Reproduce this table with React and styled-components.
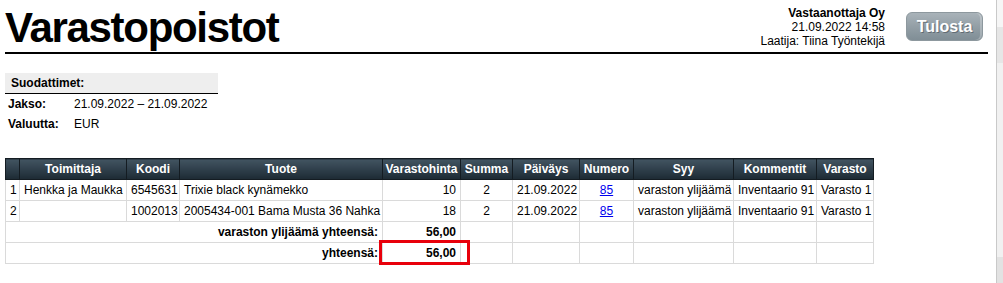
import styled, { createGlobalStyle } from "styled-components";

const GlobalStyle = createGlobalStyle`
  html, body {
    margin: 0;
    padding: 0;
    background: #fff;
  }
  body {
    font-family: "Liberation Sans", Arial, sans-serif;
    font-size: 12px;
    color: #000;
  }
`;

const Page = styled.div`
  display: flex;
  min-height: 283px;
`;

const Main = styled.div`
  flex: 1;
  padding: 0 8px 0 5px;
`;

const ScrollEdge = styled.div`
  width: 6px;
  border-left: 1px solid #c9c9c9;
  background: linear-gradient(
    to bottom,
    #f6f6f6 0,
    #f6f6f6 27px,
    #e6e6e6 27px,
    #e6e6e6 63px,
    #f1f1f1 63px,
    #f1f1f1 257px,
    #e2e2e2 257px
  );
`;

const Header = styled.div`
  display: flex;
  align-items: flex-start;
  padding-top: 4px;
  border-bottom: 2px solid #000;
`;

const Title = styled.h1`
  flex: 1;
  margin: 0;
  font-size: 42px;
  line-height: 48px;
  font-weight: bold;
  letter-spacing: -1.3px;
`;

const Meta = styled.div`
  padding-top: 2px;
  text-align: right;
  line-height: 14px;
`;

const MetaLine = styled.div`
  font-weight: ${(props) => (props.$bold ? "bold" : "normal")};
`;

const PrintButton = styled.button`
  margin: 8px 5px 0 21px;
  width: 77px;
  height: 29px;
  padding: 0;
  border: 1px solid #8d989e;
  border-radius: 6px;
  background: linear-gradient(to bottom, #a9b3b9 0%, #939fa6 50%, #808e96 100%);
  color: #fff;
  font-family: "Liberation Sans", Arial, sans-serif;
  font-size: 16px;
  font-weight: bold;
  text-shadow: 1px 1px 0 rgba(60, 70, 78, 0.55);
  box-shadow: inset -2px 0 0 rgba(255, 255, 255, 0.25);
  cursor: pointer;
`;

const FilterTable = styled.table`
  margin-top: 19px;
  width: 213px;
  border-collapse: collapse;
  line-height: 14px;
`;

const FilterHead = styled.th`
  background: #eee;
  border-bottom: 1px solid #000;
  text-align: left;
  padding: 3px 6px;
  font-weight: bold;
`;

const FilterLabel = styled.td`
  width: 60px;
  padding: 3px 3px;
  font-weight: bold;
`;

const FilterValue = styled.td`
  padding: 3px 3px;
`;

const DataTable = styled.table`
  margin-top: 24px;
  width: 868px;
  table-layout: fixed;
  border-collapse: collapse;
  line-height: 14px;
`;

const HeadCell = styled.th`
  background: linear-gradient(to bottom, #425461 0%, #2f3f4b 50%, #1d2a33 100%);
  color: #fff;
  font-weight: bold;
  text-align: center;
  white-space: nowrap;
  padding: 3px 2px;
  border: 1px solid #141c22;
`;

const Cell = styled.td`
  padding: 3px 4px;
  border: 1px solid #dadada;
  white-space: nowrap;
  overflow: hidden;
  text-align: ${(props) => props.$align || "left"};
  font-weight: ${(props) => (props.$bold ? "bold" : "normal")};
`;

const HighlightCell = styled(Cell)`
  position: relative;
  overflow: visible;

  &::after {
    content: "";
    position: absolute;
    left: -4px;
    right: -10px;
    top: -3px;
    bottom: -2px;
    border: 3px solid #e8000b;
    pointer-events: none;
  }
`;

const NumLink = styled.a`
  color: #0000ee;
  text-decoration: underline;
`;

const widths = [14, 107, 53, 203, 78, 52, 67, 54, 100, 83, 57];
const heads = ["", "Toimittaja", "Koodi", "Tuote", "Varastohinta", "Summa", "Päiväys", "Numero", "Syy", "Kommentit", "Varasto"];

const rows = [
  { n: 1, supplier: "Henkka ja Maukka", code: "6545631", product: "Trixie black kynämekko", price: "10" },
  { n: 2, supplier: "", code: "1002013", product: "2005434-001 Bama Musta 36 Nahka", price: "18" },
];

function EmptyTail() {
  return (
    <>
      <Cell />
      <Cell />
      <Cell />
      <Cell />
      <Cell />
      <Cell />
    </>
  );
}

export default function App() {
  return (
    <Page>
      <GlobalStyle />
      <Main>
        <Header>
          <Title>Varastopoistot</Title>
          <Meta>
            <MetaLine $bold>Vastaanottaja Oy</MetaLine>
            <MetaLine>21.09.2022 14:58</MetaLine>
            <MetaLine>Laatija: Tiina Työntekijä</MetaLine>
          </Meta>
          <PrintButton>Tulosta</PrintButton>
        </Header>

        <FilterTable>
          <thead>
            <tr>
              <FilterHead colSpan={2}>Suodattimet:</FilterHead>
            </tr>
          </thead>
          <tbody>
            <tr>
              <FilterLabel>Jakso:</FilterLabel>
              <FilterValue>21.09.2022 – 21.09.2022</FilterValue>
            </tr>
            <tr>
              <FilterLabel>Valuutta:</FilterLabel>
              <FilterValue>EUR</FilterValue>
            </tr>
          </tbody>
        </FilterTable>

        <DataTable>
          <colgroup>
            {widths.map((w, i) => (
              <col key={i} style={{ width: w }} />
            ))}
          </colgroup>
          <thead>
            <tr>
              {heads.map((h, i) => (
                <HeadCell key={i}>{h}</HeadCell>
              ))}
            </tr>
          </thead>
          <tbody>
            {rows.map((r) => (
              <tr key={r.n}>
                <Cell $align="center">{r.n}</Cell>
                <Cell>{r.supplier}</Cell>
                <Cell>{r.code}</Cell>
                <Cell>{r.product}</Cell>
                <Cell $align="right">{r.price}</Cell>
                <Cell $align="center">2</Cell>
                <Cell $align="center">21.09.2022</Cell>
                <Cell $align="center">
                  <NumLink href="#">85</NumLink>
                </Cell>
                <Cell>varaston ylijäämä</Cell>
                <Cell>Inventaario 91</Cell>
                <Cell>Varasto 1</Cell>
              </tr>
            ))}
            <tr>
              <Cell colSpan={4} $align="right" $bold>
                varaston ylijäämä yhteensä:
              </Cell>
              <Cell $align="right" $bold>56,00</Cell>
              <EmptyTail />
            </tr>
            <tr>
              <Cell colSpan={4} $align="right" $bold>
                yhteensä:
              </Cell>
              <HighlightCell $align="right" $bold>56,00</HighlightCell>
              <EmptyTail />
            </tr>
          </tbody>
        </DataTable>
      </Main>
      <ScrollEdge />
    </Page>
  );
}
